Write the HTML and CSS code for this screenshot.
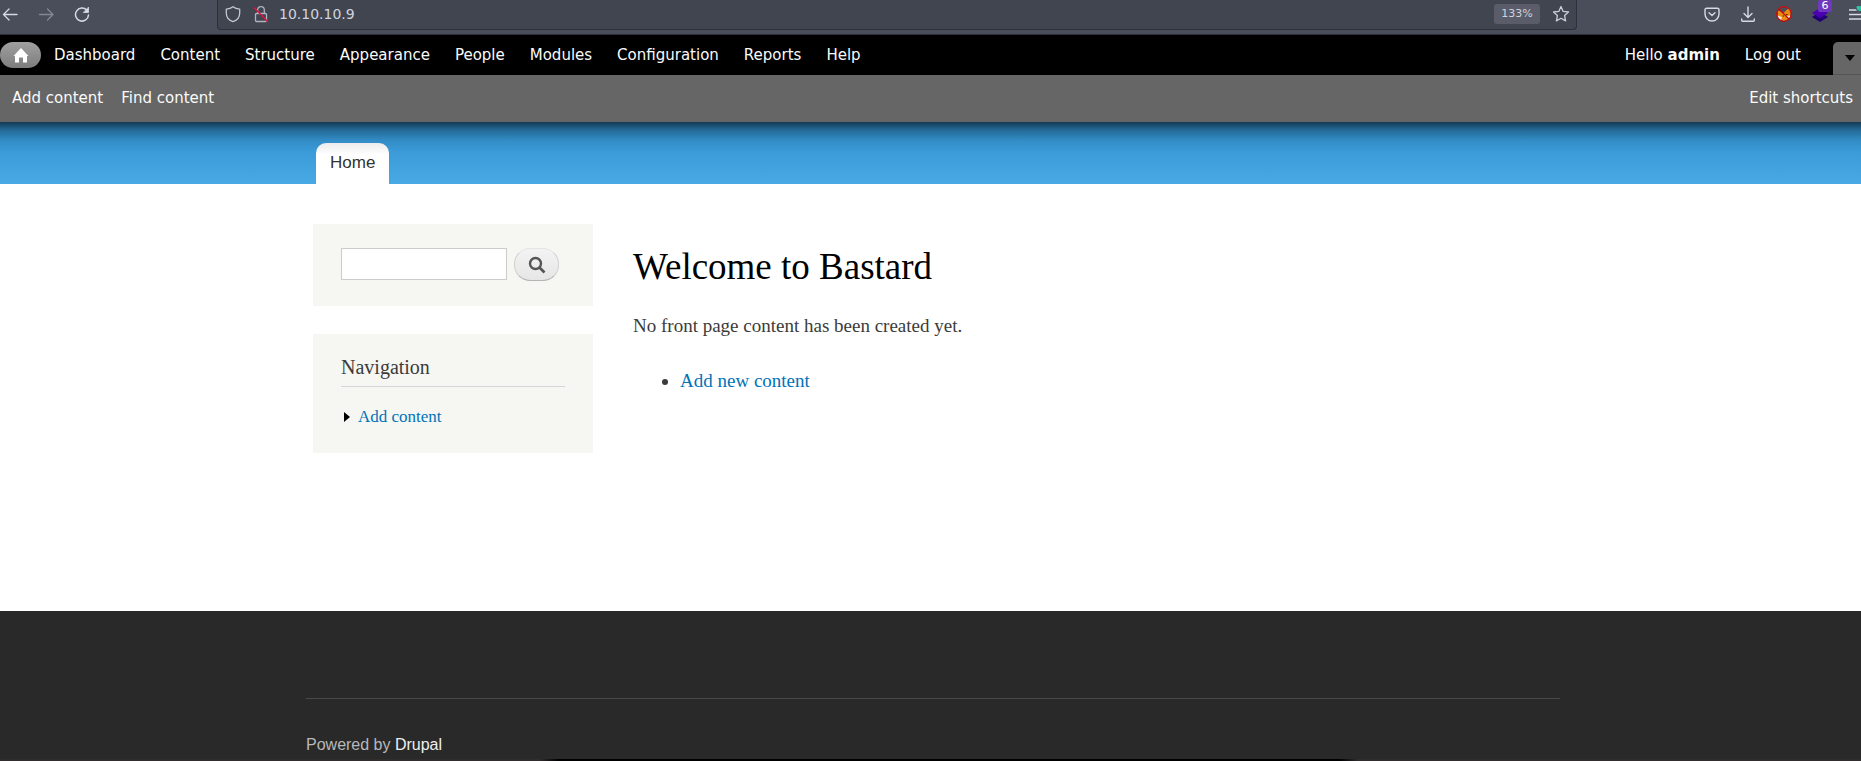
FILE: index.html
```html
<!DOCTYPE html>
<html lang="en">
<head>
<meta charset="utf-8">
<title>Welcome to Bastard</title>
<link rel="stylesheet" href="styles.css">
</head>
<body>
<div class="chrome">
  <div class="chrome-nav">
    <button class="icon-btn" aria-label="Back"><svg width="16" height="16" viewBox="0 0 16 16" fill="none" stroke="#d7dae4" stroke-width="1.3" stroke-linecap="round" stroke-linejoin="round"><path d="M15 8.500H1.500M7 3 1.500 8.500 7 14"/></svg></button>
    <button class="icon-btn" aria-label="Forward" disabled><svg width="16" height="16" viewBox="0 0 16 16" fill="none" stroke="#858894" stroke-width="1.300" stroke-linecap="round" stroke-linejoin="round"><path d="M1.500 8.500H15M9.500 3 15 8.500 9.500 14"/></svg></button>
    <button class="icon-btn" aria-label="Reload"><svg width="16" height="16" viewBox="0 0 16 16" fill="none" stroke="#d7dae4" stroke-width="1.500" stroke-linecap="round"><path d="M12.800 4.200A6.500 6.500 0 1 0 14.500 9"/><path d="M14.500 1.500V6.500H9.700Z" fill="#d7dae4" stroke-width=".8" stroke-linejoin="round"/></svg></button>
  </div>
  <div class="address">
    <svg width="16" height="18" viewBox="0 0 16 18" fill="none" stroke="#c3c7d2" stroke-width="1.300" stroke-linejoin="round"><path d="M8 1.700C6 3.400 3.500 4 1.300 4.100V8c0 4.200 2.700 7.300 6.700 8.600 4-1.300 6.700-4.400 6.700-8.600V4.100C12.500 4 10 3.400 8 1.700Z"/></svg>
    <svg width="16" height="18" viewBox="0 0 16 18" fill="none" stroke-linecap="round"><g stroke="#aeb3c0" stroke-width="1.300"><rect x="2.500" y="8.500" width="11" height="8" rx="1"/><path d="M4.700 8V5a3.300 3.300 0 0 1 6.600 0V8"/></g><path d="M1.500 3 14.500 16.500" stroke="#e2123c" stroke-width="1.400"/></svg>
    <input class="address-input" type="text" aria-label="Address" value="10.10.10.9">
    <button class="zoom-level">133%</button>
    <button class="icon-btn" aria-label="Bookmark"><svg width="18" height="18" viewBox="0 0 18 18" fill="none" stroke="#c9cdd8" stroke-width="1.300" stroke-linejoin="round"><path d="m9 1.500 2.200 4.900 5.300.6-3.900 3.600 1 5.300L9 13.300l-4.600 2.600 1-5.300L1.500 7l5.300-.6Z"/></svg></button>
  </div>
  <div class="chrome-tools">
    <button class="icon-btn" aria-label="Pocket"><svg width="16" height="16" viewBox="0 0 16 16" fill="none" stroke="#d7dae4" stroke-width="1.400" stroke-linecap="round" stroke-linejoin="round"><path d="M2.500 2.200h11a1.500 1.500 0 0 1 1.500 1.500V8A7 7 0 0 1 1 8V3.700a1.500 1.500 0 0 1 1.500-1.500Z"/><path d="M5 6.800 8 9.600l3-2.800"/></svg></button>
    <button class="icon-btn" aria-label="Downloads"><svg width="16" height="18" viewBox="0 0 16 18" fill="none" stroke="#d7dae4" stroke-width="1.400" stroke-linecap="round" stroke-linejoin="round"><path d="M8 2v10M4 8.500l4 4 4-4M1.700 14v1.300q0 1 1 1h10.600q1 0 1-1V14"/></svg></button>
    <button class="icon-btn" aria-label="Proxy off"><svg width="16" height="16" viewBox="0 0 16 16"><path d="M2 8.500 1.500 4.500l3.500 1 2.500 1.500L11 3.500 14 2.500l.7 5-1 5L8 15 3.500 13.500 1.500 10.500Z" fill="#e98a12"/><path d="M1.500 9.500 6 11 5 14 2.700 12.500ZM11 10l3.500-.5L12.500 13Z" fill="#f5e8da"/><path d="M6.500 10h1.500M10 8.500h1.500" stroke="#51310d"/><circle cx="8" cy="8" r="7.300" fill="none" stroke="#c90c0c" stroke-width="1.300"/><path d="m3 3 10 10" stroke="#c90c0c" stroke-width="1.300"/></svg></button>
    <button class="icon-btn layers" aria-label="Extension, 6 items"><svg width="16" height="16" viewBox="0 0 16 16"><path d="m0 11 8 5 8-5-8-5Z" fill="#210073"/><path d="m0 7 8 5 8-5-8-5Z" fill="#4c00b4"/></svg><span class="badge">6</span></button>
    <button class="icon-btn menu" aria-label="Menu"><svg width="16" height="16" viewBox="0 0 16 16" fill="none"><path d="M1 4h14M1 8.500h14M1 13h14" stroke="#d7dae4" stroke-width="1.400"/><circle cx="12" cy="1.500" r="4" fill="#2ac3a2" stroke="#4a4d5a"/></svg></button>
  </div>
</div>

<nav class="toolbar" aria-label="Administration">
  <a class="home" href="#" aria-label="Home"><svg width="16" height="16" viewBox="0 0 16 16" fill="#fff"><path d="M8 1 15.500 9H14v6.500h-4V10.500H6v5H2V9H.5Z"/></svg></a>
  <ul class="toolbar-menu">
    <li><a href="#">Dashboard</a></li>
    <li><a href="#">Content</a></li>
    <li><a href="#">Structure</a></li>
    <li><a href="#">Appearance</a></li>
    <li><a href="#">People</a></li>
    <li><a href="#">Modules</a></li>
    <li><a href="#">Configuration</a></li>
    <li><a href="#">Reports</a></li>
    <li><a href="#">Help</a></li>
  </ul>
  <ul class="toolbar-menu toolbar-user">
    <li><a href="#">Hello <strong>admin</strong></a></li>
    <li><a href="#">Log out</a></li>
  </ul>
  <button class="drawer-toggle" aria-label="Hide shortcuts"><svg width="10" height="6" viewBox="0 0 10 6"><path d="M0 0h10L5 6Z" fill="#000"/></svg></button>
</nav>
<div class="shortcuts">
  <a href="#">Add content</a>
  <a href="#">Find content</a>
  <a class="edit-shortcuts" href="#">Edit shortcuts</a>
</div>

<header class="site-header">
  <div class="container">
    <a class="tab" href="#">Home</a>
  </div>
</header>

<div class="site-body">
  <div class="container columns">
    <aside class="sidebar">
      <form class="block search">
        <input class="search-input" type="text" aria-label="Search">
        <button class="search-btn" type="button" aria-label="Search"><svg width="18" height="18" viewBox="0 0 18 18" fill="none" stroke="#555"><circle cx="7.500" cy="7.500" r="5.500" stroke-width="2.400"/><path d="m11.500 11.500 5 5" stroke-width="2.600"/></svg></button>
      </form>
      <section class="block navigation">
        <h2>Navigation</h2>
        <ul>
          <li><svg width="6" height="10" viewBox="0 0 6 10"><path d="M0 0 6 5 0 10Z" fill="#000"/></svg><a href="#">Add content</a></li>
        </ul>
      </section>
    </aside>
    <main class="content">
      <h1>Welcome to Bastard</h1>
      <p>No front page content has been created yet.</p>
      <ul>
        <li><a href="#">Add new content</a></li>
      </ul>
    </main>
  </div>
</div>

<footer class="site-footer">
  <div class="container">
    <p class="powered">Powered by <a href="#">Drupal</a></p>
  </div>
</footer>
<div class="bottom-edge"></div>
</body>
</html>
```
FILE: styles.css
```css
* {
  box-sizing: border-box;
}

body {
  margin: 0;
  min-height: 100vh;
  display: flex;
  flex-direction: column;
  overflow-x: hidden;
  background: #fff;
  color: #3b3b3b;
  font-family: "Liberation Serif", "Times New Roman", serif;
  font-size: 19px;
  line-height: 28px;
}

a {
  color: #0073b9;
  text-decoration: none;
}

ul {
  list-style: none;
  margin: 0;
  padding: 0;
}

button {
  border: 0;
  padding: 0;
  background: none;
  font: inherit;
}

svg {
  display: block;
  flex: none;
}

/* Browser bar */
.chrome {
  display: flex;
  height: 35px;
  background: #4a4d5a;
  border-bottom: 1px solid #2b2d38;
  font-family: "DejaVu Sans", sans-serif;
}

.chrome-nav {
  display: flex;
  align-items: center;
  gap: 20px;
  width: 217px;
  padding: 0 0 6px 2px;
}

.icon-btn {
  display: flex;
}

.address {
  flex: 1;
  display: flex;
  align-items: center;
  gap: 12px;
  height: 30px;
  padding: 0 6px 2px 7px;
  background: #414550;
  border: 1px solid #2d303b;
  border-top: 0;
  border-radius: 0 0 4px 4px;
}

.address-input {
  flex: 1;
  min-width: 0;
  border: 0;
  padding: 0;
  margin-left: -2px;
  outline: 0;
  background: none;
  color: #d0d4df;
  font: 14px/20px "DejaVu Sans", sans-serif;
}

.zoom-level {
  width: 46px;
  height: 20px;
  border-radius: 3px;
  background: #5a5d69;
  color: #cfd2dc;
  font-size: 11px;
  line-height: 20px;
}

.chrome-tools {
  display: flex;
  align-items: center;
  gap: 20px;
  width: 284px;
  padding: 0 0 6px 127px;
}

.layers {
  position: relative;
}

.badge {
  position: absolute;
  top: -6px;
  left: 6px;
  width: 14px;
  height: 12px;
  border-radius: 2px;
  background: #7039bd;
  color: #fff;
  font-size: 11px;
  line-height: 12px;
  text-align: center;
}

/* Admin toolbar */
.toolbar {
  display: flex;
  align-items: center;
  height: 40px;
  background: #000;
  font: 15px/20px "DejaVu Sans", sans-serif;
}

.home {
  display: flex;
  align-items: center;
  justify-content: center;
  width: 41px;
  height: 26px;
  border-radius: 13px;
  background: linear-gradient(#a0a0a0, #7d7d7d);
}

.toolbar-menu {
  display: flex;
  gap: 25px;
  margin-left: 13px;
}

.toolbar-menu a,
.shortcuts a {
  color: #fafafa;
}

.toolbar-user {
  margin-left: auto;
  margin-right: 32px;
}

.drawer-toggle {
  align-self: flex-end;
  display: flex;
  align-items: center;
  justify-content: center;
  width: 28px;
  height: 33px;
  padding-left: 5px;
  border-bottom: 1px solid #555;
  border-top-left-radius: 5px;
  background: #666;
}

.shortcuts {
  display: flex;
  align-items: center;
  gap: 18px;
  height: 47px;
  padding: 0 8px 2px 12px;
  background: #666;
  font: 15px/20px "DejaVu Sans", sans-serif;
}

.edit-shortcuts {
  margin-left: auto;
}

/* Site header */
.container {
  width: 100%;
  max-width: 1254px;
  margin: 0 auto;
}

.site-header,
.site-body,
.site-footer {
  padding-left: 5px;
}

.site-header {
  display: flex;
  align-items: flex-end;
  height: 62px;
  background:
    linear-gradient(rgba(0, 0, 0, 0.6), rgba(0, 0, 0, 0.28) 8px, rgba(0, 0, 0, 0.08) 18px, rgba(0, 0, 0, 0) 30px),
    linear-gradient(#2f8fce, #48a9e4);
}

.site-header .container {
  display: flex;
  padding-left: 10px;
}

.tab {
  height: 41px;
  padding: 0 14px;
  border-radius: 10px 10px 0 0;
  background: linear-gradient(#ececec, #fff 12px);
  color: #333;
  font: 17px/39px "Liberation Sans", Arial, sans-serif;
}

/* Columns */
.columns {
  display: flex;
  gap: 40px;
  min-height: 427px;
  padding: 40px 7px 0;
}

.sidebar {
  display: flex;
  flex-direction: column;
  gap: 28px;
  width: 280px;
}

.block {
  padding: 24px 28px;
  background: #f6f6f2;
}

.search {
  display: flex;
  gap: 7px;
  height: 82px;
}

.search-input {
  width: 166px;
  height: 32px;
  border: 1px solid #ccc;
  background: #fff;
}

.search-btn {
  display: flex;
  align-items: center;
  justify-content: center;
  width: 45px;
  height: 33px;
  border: 1px solid #d0d0d0;
  border-top-color: #e4e4e4;
  border-bottom-color: #b4b4b4;
  border-radius: 16px;
  background: linear-gradient(#f3f3f3, #e6e6e6);
}

.navigation {
  padding: 20px 28px 24px;
}

h2 {
  margin: 0 0 18px;
  padding-bottom: 6px;
  border-bottom: 1px solid #d3d7d9;
  font-size: 20px;
  font-weight: 400;
  line-height: 26px;
}

.navigation li {
  display: flex;
  align-items: center;
  gap: 8px;
  padding-left: 3px;
  font-size: 17px;
  line-height: 24px;
}

.content h1 {
  margin: 22px 0 24px;
  color: #000;
  font-size: 37px;
  font-weight: 400;
  line-height: 42px;
}

.content p {
  margin: 0 0 27px;
}

.content ul {
  padding-left: 47px;
  list-style: disc;
}

/* Footer */
.site-footer {
  flex: 1;
  padding-top: 87px;
  background: #292929;
}

.powered {
  margin: 0;
  padding-top: 35px;
  border-top: 1px solid #484a49;
  color: #b8b8b8;
  font: 16px/22px "Liberation Sans", Arial, sans-serif;
}

.powered a {
  color: #eee;
}

.bottom-edge {
  height: 2px;
  background: linear-gradient(90deg, #312d2e 29%, #000 30%, #000 72%, #312d2e 73%);
}
```
